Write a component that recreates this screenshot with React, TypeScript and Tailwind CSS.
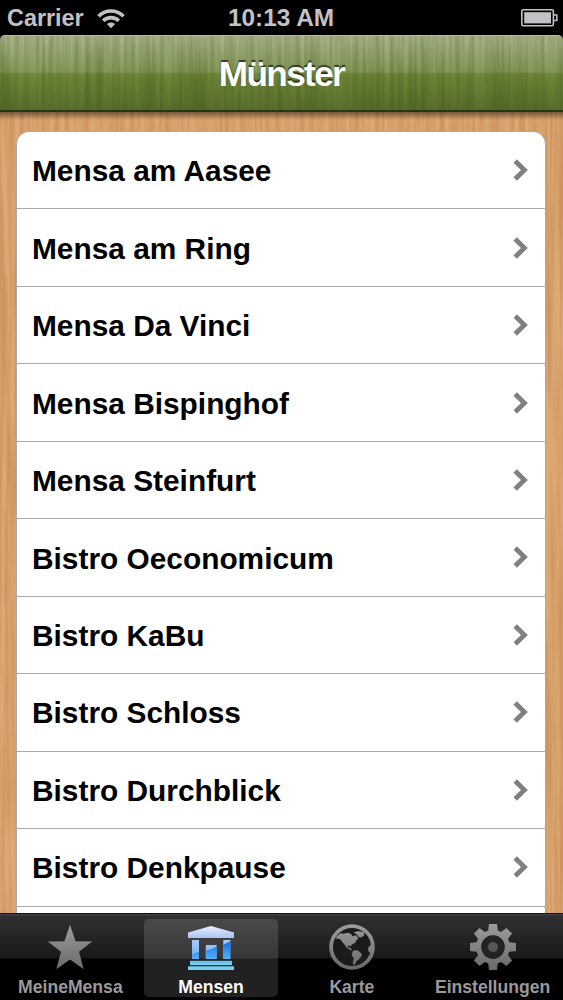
import type { ReactNode } from "react";

const canteens = [
  "Mensa am Aasee",
  "Mensa am Ring",
  "Mensa Da Vinci",
  "Mensa Bispinghof",
  "Mensa Steinfurt",
  "Bistro Oeconomicum",
  "Bistro KaBu",
  "Bistro Schloss",
  "Bistro Durchblick",
  "Bistro Denkpause",
  "",
];

/** Vertical wood grain, drawn in the current text colour over a surface. */
const Grain = ({ id, seed, className }: { id: string; seed: number; className: string }) => (
  <svg className={`pointer-events-none absolute inset-0 h-full w-full ${className}`} aria-hidden="true">
    <filter id={id} x="0" y="0" width="100%" height="100%" colorInterpolationFilters="sRGB">
      <feTurbulence type="fractalNoise" baseFrequency="0.2 0.007" numOctaves={3} seed={seed} result="noise" />
      <feColorMatrix in="noise" values="0 0 0 0 0  0 0 0 0 0  0 0 0 0 0  2.4 0 0 0 -0.8" result="mask" />
      <feComposite in="SourceGraphic" in2="mask" operator="in" />
    </filter>
    <rect width="100%" height="100%" fill="currentColor" filter={`url(#${id})`} />
  </svg>
);

const WifiIcon = () => (
  <svg width="28" height="21" viewBox="0 0 28 21" fill="none" stroke="#c3c1c5" strokeWidth="3.6">
    <path d="M1.5 8.2C8.3 1.2 19.7 1.2 26.5 8.2" />
    <path d="M6.2 12.8C10.4 8.6 17.6 8.6 21.8 12.8" />
    <path d="M14 20.2L9.9 16.1C12.2 13.8 15.8 13.8 18.1 16.1Z" fill="#c3c1c5" stroke="none" />
  </svg>
);

const BatteryIcon = () => (
  <svg width="37" height="18" viewBox="0 0 37 18">
    <rect x="0.8" y="0.8" width="31.6" height="16" rx="1.5" fill="none" stroke="#c3c1c5" strokeWidth="1.6" />
    <rect x="3.2" y="3.2" width="26.8" height="11.2" fill="#c3c1c5" />
    <path d="M32.5 5.9H35.8V11.6H32.5" fill="none" stroke="#c3c1c5" strokeWidth="1.5" />
  </svg>
);

const Chevron = () => (
  <svg width="16" height="22" viewBox="0 0 16 22" fill="none" stroke="#808080" strokeWidth="4.8">
    <path d="M2.2 2L11.4 11L2.2 20" />
  </svg>
);

const IconGradient = ({ id }: { id: string }) => (
  <linearGradient id={id} x1="0" y1="0" x2="0" y2="46" gradientUnits="userSpaceOnUse">
    <stop offset="0" stopColor="#9c9c9e" />
    <stop offset="1" stopColor="#69696b" />
  </linearGradient>
);

const StarIcon = () => (
  <svg width="46" height="46" viewBox="0 0 46 46">
    <IconGradient id="star" />
    <path
      d="M23 0.7L28.6 17.2L45.2 17.6L32 27.8L36.7 45.3L23 35.6L9.3 45.3L14 27.8L0.8 17.6L17.4 17.2Z"
      fill="url(#star)"
    />
  </svg>
);

const BankIcon = () => (
  <svg width="46" height="46" viewBox="0 0 46 46">
    <defs>
      <linearGradient id="roof" x1="0" y1="0" x2="0" y2="1">
        <stop offset="0" stopColor="#e8eefe" />
        <stop offset="1" stopColor="#a9c3f4" />
      </linearGradient>
      <linearGradient id="column" x1="0" y1="0" x2="0" y2="1">
        <stop offset="0" stopColor="#a6cbf7" />
        <stop offset="1" stopColor="#6eaff3" />
      </linearGradient>
      <linearGradient id="shade" x1="0" y1="16" x2="0" y2="35" gradientUnits="userSpaceOnUse">
        <stop offset="0.3" stopColor="#2080ea" />
        <stop offset="1" stopColor="#56aef5" />
      </linearGradient>
      <linearGradient id="step" x1="0" y1="0" x2="0" y2="1">
        <stop offset="0" stopColor="#67bde9" />
        <stop offset="1" stopColor="#72d3f5" />
      </linearGradient>
    </defs>
    <path d="M0 8.5L23 2L46 8.5V14H0Z" fill="url(#roof)" />
    <path d="M4 16H11V35H4Z M35.3 16H42.3V35H35.3Z M17.8 21H28.6V35H17.8Z" fill="url(#column)" />
    <path
      d="M4 30.2L11 27.8V35H4Z M17.8 26.8C21.5 26 25.5 24.6 28.6 22.6V35H17.8Z M35.3 20.8L42.3 17V35H35.3Z"
      fill="url(#shade)"
    />
    <rect x="2" y="36.8" width="42" height="4.3" fill="url(#step)" />
    <rect x="0" y="42.3" width="46" height="3.7" fill="#75d0f3" />
  </svg>
);

const GlobeIcon = () => (
  <svg width="46" height="46" viewBox="0 0 46 46">
    <IconGradient id="globe" />
    <circle cx="23" cy="23" r="20" fill="#1b1b1d" />
    <g fill="url(#globe)">
      <path d="M7.3 12.5L11.5 9.3L15 9.8L18.2 8.8L21.8 9.8L23.5 12.2L27 11.2L29.5 14.2L27.3 16.4L26 19L22.7 20.4L22 22.2L19.2 21.6L18.5 23.2L21.6 24L23.2 26.3L21.3 26L17.8 23.8L15.6 20.8L12.5 16.8L10.5 14.8L7.5 15Z" />
      <path d="M24.5 8.4L29 7L35 8.2L35.3 11.3L32.2 13.6L29.4 12.8L28 10.5Z" />
      <path d="M24 26.7L28.5 26.2L33.2 30.2L31.3 34.1L27.3 37.4L25.4 41.8L23.7 39.2L24.7 34.5L22.7 30.7Z" />
      <path d="M42 20.8L39 24L39.7 28L42 28.6Z" />
    </g>
    <circle cx="23" cy="23" r="20.9" fill="none" stroke="url(#globe)" strokeWidth="3.8" />
  </svg>
);

const GearIcon = () => (
  <svg width="46" height="46" viewBox="0 0 46 46">
    <IconGradient id="gear" />
    <mask id="gear-mask">
      <g fill="white">
        <circle cx="23" cy="23" r="17" />
        {[0, 45, 90, 135].map((angle) => (
          <path key={angle} d="M19 0H27L28 8V38L27 46H19L18 38V8Z" transform={`rotate(${angle} 23 23)`} />
        ))}
      </g>
      <circle cx="23" cy="23" r="11.7" fill="black" />
    </mask>
    <rect width="46" height="46" fill="url(#gear)" mask="url(#gear-mask)" />
    <circle cx="23" cy="23" r="11.5" fill="#232325" />
    <circle cx="23" cy="23" r="5" fill="#565658" />
  </svg>
);

const Tab = ({ label, icon, active }: { label: string; icon: ReactNode; active?: boolean }) => (
  <div className="flex min-w-0 flex-1 justify-center pt-[5px]">
    <div
      className={`flex h-[78px] w-[134px] flex-col items-center rounded-[5px] pt-[5px] ${
        active ? "bg-white/13 text-white" : "text-[#9a9a9c]"
      }`}
    >
      {icon}
      <span className="mt-[7px] text-[17.6px] leading-5 font-bold whitespace-nowrap">{label}</span>
    </div>
  </div>
);

export default function App() {
  return (
    <div className="flex h-[1000px] w-[563px] flex-col overflow-hidden bg-black font-['Liberation_Sans',Arial,sans-serif]">
      {/* Status bar */}
      <div className="grid h-[35px] grid-cols-3 items-center pr-[5px] pl-[7px] font-bold text-[#c3c1c5]">
        <div className="flex items-center gap-[13px]">
          <span className="pt-px text-[23.4px]">Carrier</span>
          <WifiIcon />
        </div>
        <span className="pr-[3px] text-center text-[24.4px]">10:13 AM</span>
        <div className="flex justify-end">
          <BatteryIcon />
        </div>
      </div>

      {/* Navigation bar */}
      <header className="relative z-10 flex h-[77px] shrink-0 items-center justify-center overflow-hidden rounded-t-[5px] border-t border-b-2 border-t-[#b5bd99] border-b-[#293613] bg-[linear-gradient(#a9b48a_0%,#849a59_49%,#6f8839_51%,#596f2f_100%)]">
        <Grain id="nav-grain" seed={8} className="text-[#33460f] opacity-25" />
        <h1 className="relative pt-px text-[35.2px] leading-none font-bold tracking-[-1.65px] text-white [text-shadow:0_-2px_1px_rgba(0,0,0,0.6)]">
          Münster
        </h1>
      </header>

      {/* Canteen list on the wooden board */}
      <main className="relative min-h-0 flex-1 overflow-hidden bg-[#dca873] pt-[19px] pr-[17px] pl-[16px]">
        <Grain id="board-grain" seed={3} className="text-[#a8642c] opacity-30" />
        <div className="pointer-events-none absolute inset-x-0 top-0 h-2 bg-linear-to-b from-black/45 to-transparent" />
        <ul className="relative rounded-t-[13px] border border-[#aaaaac] bg-white">
          {canteens.map((name) => (
            <li
              key={name}
              className="flex h-[77.46px] items-center justify-between border-b-[1.5px] border-[#ababad] pr-[16px] pl-[15px]"
            >
              <span className="pt-[2px] text-[29.85px] leading-none font-bold text-black">{name}</span>
              <Chevron />
            </li>
          ))}
        </ul>
      </main>

      {/* Tab bar */}
      <nav className="flex h-[87px] shrink-0 border-t border-[#111] bg-[linear-gradient(#464648_0px,#303032_2px,#19191b_44px,#000_45px)]">
        <Tab label="MeineMensa" icon={<StarIcon />} />
        <Tab label="Mensen" icon={<BankIcon />} active />
        <Tab label="Karte" icon={<GlobeIcon />} />
        <Tab label="Einstellungen" icon={<GearIcon />} />
      </nav>
    </div>
  );
}
